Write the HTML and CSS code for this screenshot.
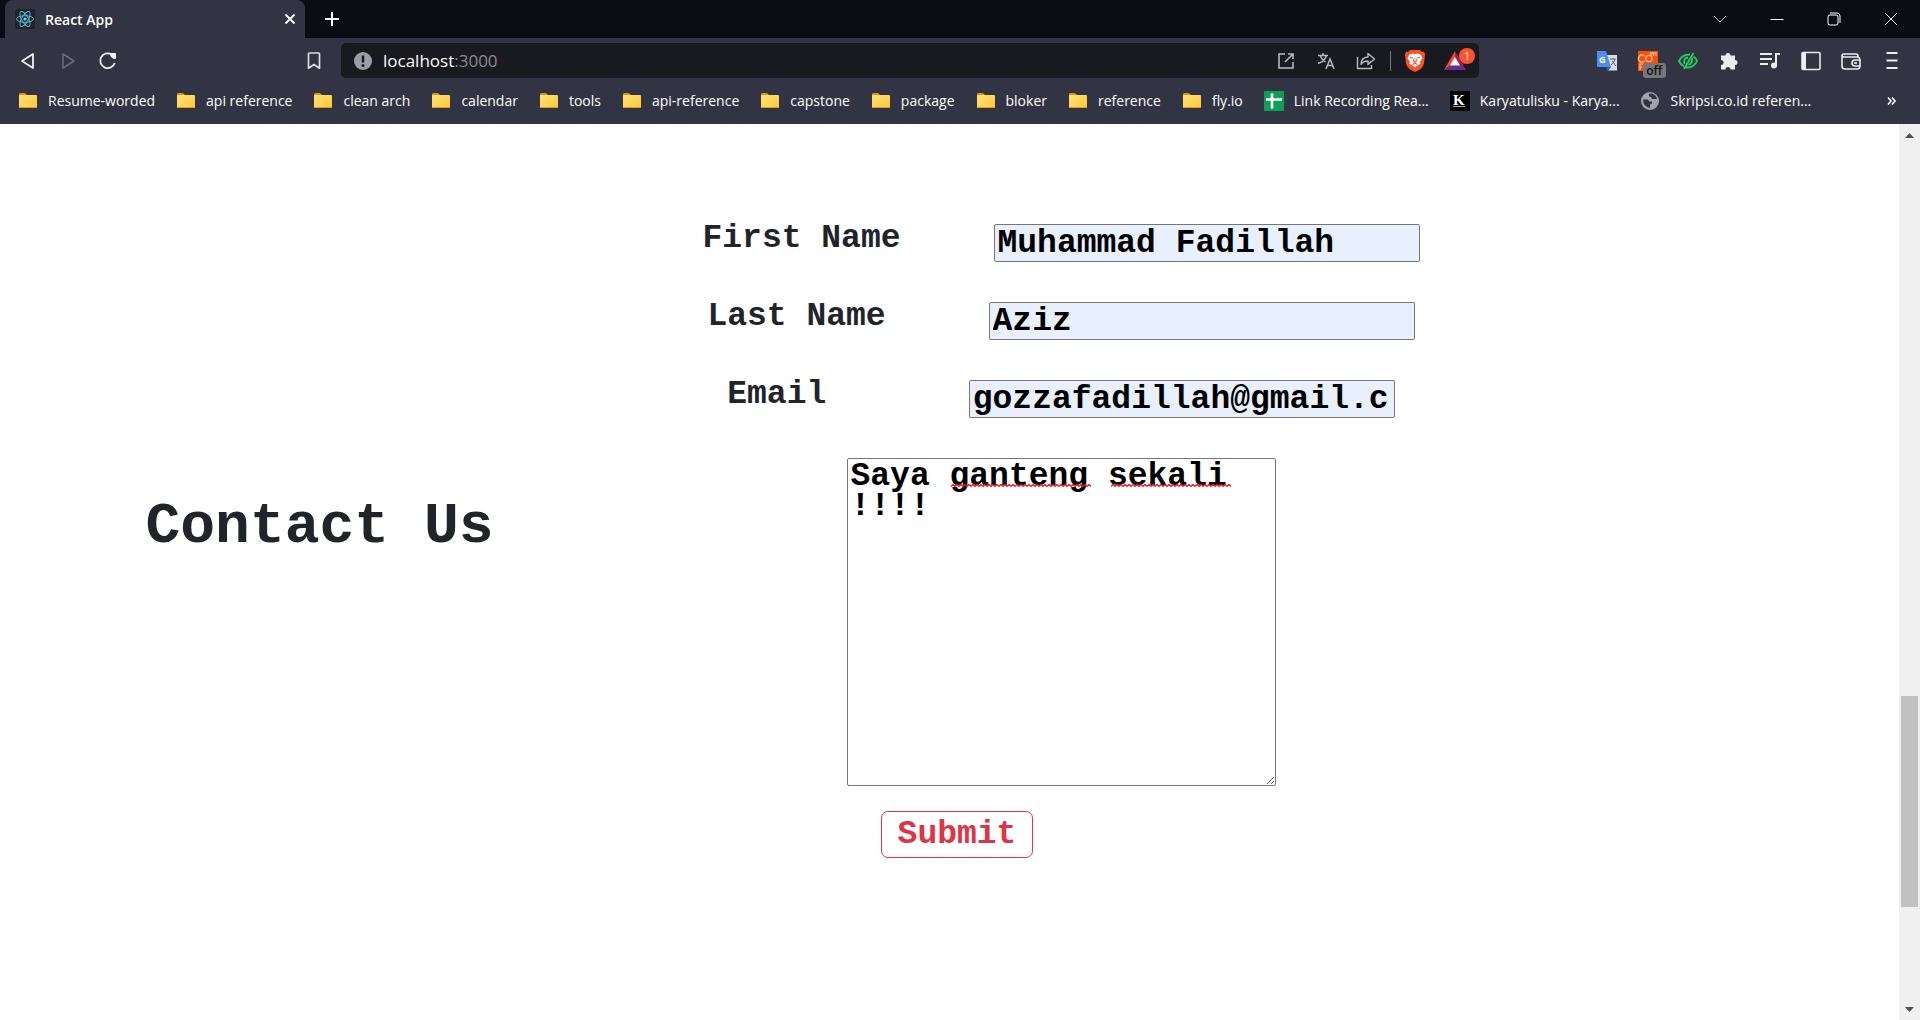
FILE: index.html
```html
<!DOCTYPE html>
<html lang="en">
<head>
<meta charset="utf-8">
<title>React App</title>
<link rel="stylesheet" href="styles.css">
</head>
<body>
<svg class="defs" aria-hidden="true">
  <defs>
    <linearGradient id="fold" x1="0" y1="0" x2="1" y2="1"><stop offset="0" stop-color="#ffe27a"/><stop offset="1" stop-color="#fdc836"/></linearGradient>
    <symbol id="folder" viewBox="0 0 20 20"><path d="M1 4q0-2 1-2h5l2 2h8v5H1z" fill="#d9980c"/><rect x="1" y="4" width="18" height="13" rx="1" fill="url(#fold)"/><path d="M1.500 16.500h17" stroke="#d99e22"/></symbol>
    <pattern id="wave" width="4" height="3" patternUnits="userSpaceOnUse"><path d="M0 2.500 2 .5 4 2.500" fill="none" stroke="#f01020" stroke-width="1.400"/></pattern>
  </defs>
</svg>

<header class="browser">
  <div class="tabstrip">
    <div class="tab">
      <svg class="i20" viewBox="0 0 20 20"><rect width="20" height="20" rx="2" fill="#212327"/><g fill="none" stroke="#53b9d4"><ellipse cx="10" cy="10" rx="8.500" ry="3.300"/><ellipse cx="10" cy="10" rx="8.500" ry="3.300" transform="rotate(60 10 10)"/><ellipse cx="10" cy="10" rx="8.500" ry="3.300" transform="rotate(120 10 10)"/></g><circle cx="10" cy="10" r="1.600" fill="#61dafb"/></svg>
      <span class="tab-title">React App</span>
      <button class="plain" aria-label="Close tab"><svg width="10" height="10"><path d="m.5.5 9 9m0-9-9 9" stroke="#fff" stroke-width="1.800"/></svg></button>
    </div>
    <button class="plain newtab" aria-label="New tab"><svg width="16" height="16"><path d="M8 1v14M1 8h14" stroke="#fff" stroke-width="2"/></svg></button>
    <div class="window-controls">
      <button class="plain" aria-label="Search tabs"><svg width="14" height="14"><path d="m1 4 6 6 6-6" fill="none" stroke="#ccc"/></svg></button>
      <button class="plain" aria-label="Minimize"><svg width="14" height="14"><path d="M.5 7.500h13" stroke="#fff"/></svg></button>
      <button class="plain" aria-label="Restore"><svg width="14" height="14"><g fill="none" stroke="#fff"><rect x="1" y="3" width="10" height="10" rx="2"/><path d="M3 1h7q3 0 3 3v7"/></g></svg></button>
      <button class="plain" aria-label="Close"><svg width="14" height="14"><path d="m1 1 12 12m0-12L1 13" stroke="#fff"/></svg></button>
    </div>
  </div>

  <div class="toolbar">
    <div class="nav">
      <button class="plain tool" aria-label="Back"><svg class="i20" viewBox="0 0 20 20"><path d="M15 3v14L4 10z" fill="none" stroke="#f0f0f2" stroke-width="1.800" stroke-linejoin="round"/></svg></button>
      <button class="plain tool" aria-label="Forward"><svg class="i20" viewBox="0 0 20 20"><path d="M5 3v14l11-7z" fill="none" stroke="#6c6e79" stroke-width="1.500" stroke-linejoin="round"/></svg></button>
      <button class="plain tool" aria-label="Reload"><svg class="i20" viewBox="0 0 20 20"><path d="M13.500 3.400A7.400 7.400 0 1 0 16.700 12" fill="none" stroke="#f0f0f2" stroke-width="1.800"/><path d="M12.500 2.500h5v5q-5 0-5-5z" fill="#f0f0f2" stroke="#f0f0f2" stroke-linejoin="round"/></svg></button>
      <button class="plain tool push" aria-label="Bookmark"><svg class="i20" viewBox="0 0 20 20"><path d="M4.500 3q0-1 1-1h9q1 0 1 1v14.200L10 13.500l-5.500 3.700z" fill="none" stroke="#ddd" stroke-width="1.700" stroke-linejoin="round"/></svg></button>
    </div>
    <div class="omnibox">
      <svg class="i20" viewBox="0 0 20 20"><circle cx="10" cy="10" r="9" fill="#9b9da8"/><path d="M10 4.500v7" stroke="#181a20" stroke-width="2.500"/><circle cx="10" cy="14.500" r="1.500" fill="#181a20"/></svg>
      <span class="url">localhost<span class="port">:3000</span></span>
      <button class="plain tool push" aria-label="Open"><svg class="i20" viewBox="0 0 20 20"><path d="M9 3H3v14h14v-6M12 3h5v5M17 3l-8 8" fill="none" stroke="#b9bac0" stroke-width="1.600"/></svg></button>
      <button class="plain tool" aria-label="Translate"><svg class="i20" viewBox="0 0 20 20"><path d="M2 4.500h10M7 2v2.500m3.500 0Q9 10 2 12.500M4 4.500Q6 9 9.500 11M10 18l4-10 4 10m-6.700-3.500h5.400" fill="none" stroke="#b9bac0" stroke-width="1.500"/></svg></button>
      <button class="plain tool" aria-label="Share"><svg class="i20" viewBox="0 0 20 20"><path d="M1.500 6v11.500h14V14M12 2.500l6.500 5.500-6.500 5.500v-3.500q-5 0-7 3.500 0-7 7-7.500z" fill="none" stroke="#b9bac0" stroke-width="1.400" stroke-linejoin="round"/></svg></button>
      <span class="divider"></span>
      <button class="plain tool" aria-label="Brave Shields"><svg width="20" height="23" viewBox="0 0 20 23"><path d="M5 1h10l2 2 2-.5 1 3-1 9q-1 4-4 6l-5 2.500L5 20.500q-3-2-4-6l-1-9 1-3 2 .5z" fill="#fb5424"/><path d="m4.500 5.500 3-1 2.500.5 2.500-.5 3 1 2 3.500-2.500 4 .5 2-2.500 1-3 2.500-3-2.500-2.500-1 .5-2L2.500 9z" fill="#fff"/><path d="m5 8 3 1.200M15 8l-3 1.200M9 9.500 8.500 12l1.500 1 1.500-1L11 9.500M7.500 15.500 10 14.200l2.500 1.300" fill="none" stroke="#fb5424" stroke-width="1.100"/></svg></button>
      <button class="plain tool rewards" aria-label="Brave Rewards, 1 notification"><svg width="22" height="20" viewBox="0 0 22 20"><path d="M11 0 0 19l11-6z" fill="#ff4724"/><path d="m11 0 11 19-11-6z" fill="#9e1f63"/><path d="M0 19h22l-6-5H6z" fill="#662d91"/><path d="m11 6-5 8.500h10z" fill="#fff"/></svg><span class="count">1</span></button>
    </div>
    <div class="extensions">
      <button class="plain tool" aria-label="Google Translate"><svg class="i20" viewBox="0 0 20 20"><path d="M9 4h11v15.500h-9z" fill="#d9dce0"/><path d="M0 0h9l5 16H1q-1 0-1-1z" fill="#4d8bf5"/><path d="m9 16 5 0-3 4z" fill="#2e5fc0"/><path d="M13 8h6m-3-1v1m2 0q-1 4-4 6m1-4 4 5" stroke="#5f6d79" fill="none"/><text x="2" y="12" class="glyph-g">G</text></svg></button>
      <button class="plain tool comm" aria-label="Extension, off"><svg class="i20" viewBox="0 0 20 20"><rect width="20" height="20" fill="#ff4e00"/><g fill="none" stroke="#ffc7ad" stroke-width="1.200"><path d="M6.500 5a3.500 3.500 0 1 0 0 5"/><circle cx="11" cy="7.500" r="3.200"/><path d="M13 5V2h5v3m-2.500-3v3M2 19v-6h3m-3 3h2"/></g></svg><span class="off">off</span></button>
      <button class="plain tool" aria-label="Reader"><svg class="i20" viewBox="0 0 20 20"><g fill="none" stroke="#25cf60" stroke-width="1.900"><path d="M12 3.500Q4 3.500 1 10q2 4 5 5.500M8 16.500q8 .5 11-6.500-1-3-3.500-4.500M15.500 2 6 18"/><path d="M10 6.500Q5 7 6.500 13M14 7q1 5-3.500 7"/></g></svg></button>
      <button class="plain tool" aria-label="Extensions"><svg class="i20" viewBox="0 0 20 20"><path d="M2 4.500h4.500a2.500 2.500 0 1 1 5 0H16V9a2.500 2.500 0 1 1 0 5v4.500h-4.500a2.500 2.500 0 1 0-5 0H2V14a2.500 2.500 0 1 0 0-5z" fill="#ececef"/></svg></button>
      <button class="plain tool" aria-label="Media"><svg class="i20" viewBox="0 0 20 20"><path d="M0 3h12M0 8h12M0 13h8M16 15V3h4" fill="none" stroke="#ececef" stroke-width="2"/><circle cx="14" cy="14.500" r="3" fill="#ececef"/></svg></button>
      <button class="plain tool" aria-label="Side panel"><svg class="i20" viewBox="0 0 20 20"><rect x="1" y="1.500" width="18" height="17" rx="1" fill="none" stroke="#ececef" stroke-width="1.600"/><path d="M1 2h4v16H1z" fill="#ececef"/></svg></button>
      <button class="plain tool" aria-label="Wallet"><svg class="i20" viewBox="0 0 20 20"><g fill="none" stroke="#ececef" stroke-width="1.600"><path d="M17 6V5q0-2-2-2H3Q1 3 1 5v10q0 3 3 3h12q3 0 3-3V9q0-3-3-3H3Q1 6 1 4"/><path d="M19 9h-5a3 3 0 0 0 0 6h5"/><path d="M13 12h3"/></g></svg></button>
      <button class="plain tool" aria-label="Menu"><svg class="i20" viewBox="0 0 20 20"><path d="M4.500 2h11M4.500 9.500h11M4.500 17h11" stroke="#ececef" stroke-width="1.800"/></svg></button>
    </div>
  </div>

  <nav class="bookmarks" aria-label="Bookmarks">
    <a href="#"><svg class="i20"><use href="#folder"/></svg>Resume-worded</a>
    <a href="#"><svg class="i20"><use href="#folder"/></svg>api reference</a>
    <a href="#"><svg class="i20"><use href="#folder"/></svg>clean arch</a>
    <a href="#"><svg class="i20"><use href="#folder"/></svg>calendar</a>
    <a href="#"><svg class="i20"><use href="#folder"/></svg>tools</a>
    <a href="#"><svg class="i20"><use href="#folder"/></svg>api-reference</a>
    <a href="#"><svg class="i20"><use href="#folder"/></svg>capstone</a>
    <a href="#"><svg class="i20"><use href="#folder"/></svg>package</a>
    <a href="#"><svg class="i20"><use href="#folder"/></svg>bloker</a>
    <a href="#"><svg class="i20"><use href="#folder"/></svg>reference</a>
    <a href="#"><svg class="i20"><use href="#folder"/></svg>fly.io</a>
    <a href="#"><svg class="i20" viewBox="0 0 20 20"><rect width="20" height="20" rx="1" fill="#109d58"/><path d="M8 2.500v15M2 8.500h16" stroke="#fff" stroke-width="2.600"/></svg>Link Recording Rea...</a>
    <a href="#"><svg class="i20" viewBox="0 0 20 20"><rect width="20" height="20"/><text x="3" y="14" class="glyph-k">K</text><path d="M3 15.500h12" stroke="#aaa"/></svg>Karyatulisku - Karya...</a>
    <a href="#"><svg class="i20" viewBox="0 0 20 20"><circle cx="9" cy="10" r="9" fill="#a1a4ac"/><path d="M2 8.500h5l1 2h3v2l-2 1v3.500Q2 15.500 2 8.500zM8 3q-1 3 2 3l1 2h5q-1-5-6-5.500z" fill="#323443"/></svg>Skripsi.co.id referen...</a>
    <button class="plain more" aria-label="More bookmarks"><svg width="9" height="8"><path d="m1 .5 3 3.500-3 3.500M5 .5 8 4 5 7.500" fill="none" stroke="#fff" stroke-width="1.600"/></svg></button>
  </nav>
</header>

<div class="viewport">
  <main class="contact">
    <h1>Contact Us</h1>
    <form class="form">
      <div class="row"><label for="first">First Name</label><input id="first" type="text" value="Muhammad Fadillah"></div>
      <div class="row"><label for="last">Last Name</label><input id="last" type="text" value="Aziz"></div>
      <div class="row"><label for="email">Email</label><input id="email" type="text" value="gozzafadillah@gmail.com"></div>
      <div class="message">
        <textarea aria-label="Message" spellcheck="false">Saya ganteng sekali !!!!</textarea>
        <svg class="squiggle first-word" width="140" height="3"><rect width="140" height="3" fill="url(#wave)"/></svg>
        <svg class="squiggle second-word" width="120" height="3"><rect width="120" height="3" fill="url(#wave)"/></svg>
      </div>
      <div class="actions"><button class="submit" type="button">Submit</button></div>
    </form>
  </main>
  <div class="scrollbar" aria-hidden="true">
    <svg width="9" height="5"><path d="M4.500 0 9 5H0z" fill="#505050"/></svg>
    <div class="track"><div class="thumb"></div></div>
    <svg width="9" height="5"><path d="M4.500 5 9 0H0z" fill="#505050"/></svg>
  </div>
</div>
</body>
</html>
```
FILE: styles.css
```css
* { box-sizing: border-box; }

body {
  margin: 0;
  min-height: 100vh;
  display: flex;
  flex-direction: column;
  background: #fff;
  font-family: "Open Sans", "Noto Sans", sans-serif;
}

.defs { position: absolute; width: 0; height: 0; }
.i20 { width: 20px; height: 20px; flex: none; }

.plain {
  display: flex;
  align-items: center;
  justify-content: center;
  padding: 0;
  border: 0;
  background: none;
  color: inherit;
  font: inherit;
}
.plain svg { overflow: visible; }

/* Browser chrome */
.browser { background: #323443; color: #fff; }

.tabstrip {
  display: flex;
  height: 38px;
  padding: 0 1px 0 5px;
  background: #0b0b14;
}
.tab {
  display: flex;
  align-items: center;
  gap: 10px;
  width: 300px;
  padding: 0 10px;
  border-radius: 8px 8px 0 0;
  background: #323443;
}
.tab-title { flex: 1; font-size: 14px; font-weight: 600; }
.newtab { width: 54px; }
.window-controls { display: flex; margin-left: auto; }
.window-controls .plain { width: 57px; }

.toolbar { display: flex; align-items: center; height: 45px; }
.nav { display: flex; width: 341px; padding: 0 7px 0 8px; }
.tool { width: 40px; height: 35px; }
.push { margin-left: auto; }

.omnibox {
  display: flex;
  flex: 1;
  align-items: center;
  height: 35px;
  padding: 0 4px 0 12px;
  border-radius: 5px;
  background: #181a20;
}
.url { margin-left: 10px; font-size: 17px; }
.port { color: #8b8c91; }
.divider { width: 1px; height: 20px; margin: 0 4px; background: #777983; }
.rewards, .comm { position: relative; }
.count {
  position: absolute;
  top: 5px;
  right: 0;
  width: 16px;
  border-radius: 8px;
  background: #ff522e;
  font-size: 10px;
  line-height: 16px;
}
.extensions {
  display: flex;
  justify-content: space-between;
  width: 441px;
  padding: 0 8px 0 108px;
}
.off {
  position: absolute;
  top: 20px;
  right: 2px;
  width: 23px;
  border-radius: 3px;
  background: #777;
  color: #111;
  font-size: 12px;
  font-weight: 600;
  line-height: 15px;
}
.glyph-g { fill: #fff; font: bold 9px "Open Sans", sans-serif; }
.glyph-k { fill: #fff; font: bold 15px "Liberation Serif", serif; }

.bookmarks {
  display: flex;
  align-items: center;
  gap: 21px;
  height: 41px;
  padding: 0 24px 6px 18px;
  font-size: 14px;
  white-space: nowrap;
}
.bookmarks a {
  display: flex;
  align-items: center;
  gap: 10px;
  color: #fff;
  text-decoration: none;
}
.more { margin-left: auto; }

/* Page */
.viewport { display: flex; flex: 1; }
.contact {
  flex: 1;
  display: grid;
  grid-template-columns: 1fr 2fr;
  align-items: center;
  align-content: start;
  padding-top: 100px;
  color: #212529;
  font-family: "Liberation Mono", monospace;
  font-size: 33px;
  font-weight: bold;
  line-height: 30px;
}
h1 {
  margin: 0 0 28px;
  padding-left: 6px;
  text-align: center;
  font-size: 58px;
  line-height: 60px;
}
.form {
  display: flex;
  flex-direction: column;
  gap: 40px;
  width: 810px;
  max-width: 100%;
  margin-left: 23px;
}
.row { display: flex; justify-content: space-around; }
input, textarea {
  border: 1px solid #767676;
  border-radius: 2px;
  color: #000;
  font: inherit;
}
input {
  width: 426px;
  height: 38px;
  padding: 1px 6px 1px 3px;
  background: #e8f0fe;
}
.message { position: relative; align-self: center; }
textarea {
  display: block;
  width: 429px;
  height: 328px;
  padding: 3px;
  background: #fff;
}
.squiggle { position: absolute; top: 26px; }
.first-word { left: 104px; }
.second-word { left: 264px; }
.actions {
  display: flex;
  justify-content: center;
  margin-top: -15px;
  padding-right: 208px;
}
.submit {
  height: 47px;
  padding: 0 16px;
  border: 1px solid #dc3545;
  border-radius: 7px;
  background: #fff;
  color: #dc3545;
  font: inherit;
}

.scrollbar {
  display: flex;
  flex-direction: column;
  align-items: center;
  width: 21px;
  padding: 9px 0 8px;
  background: #f0f0f0;
}
.track { flex: 1; display: flex; flex-direction: column; align-self: stretch; padding: 0 2px; }
.track::before { content: ""; flex: 558; }
.track::after { content: ""; flex: 100; }
.thumb { flex: 211; background: #c1c1c1; }
```
